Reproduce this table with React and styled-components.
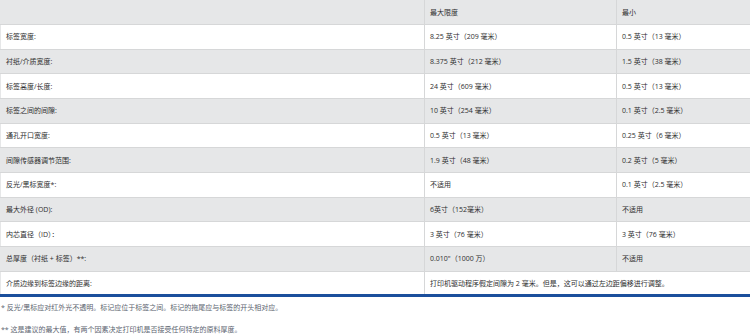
import React from 'react';
import styled, { createGlobalStyle } from 'styled-components';

const GlobalStyle = createGlobalStyle`
    html, body {
        margin: 0;
        padding: 0;
        background: #ffffff;
    }
    body {
        font-family: "Open Sans", "Noto Sans CJK SC", sans-serif;
        color: #333333;
    }
`

//STYLING
const Page = styled.div`
    width: 750px;
    height: 335px;
    overflow: hidden;
`
const SpecTable = styled.table`
    width: 750px;
    border-collapse: collapse;
    table-layout: fixed;
    border-bottom: 3px solid #1b4f9c;
`
const Row = styled.tr`
    background: ${props => (props.$shade ? '#e6e7e8' : '#ffffff')};
`
const Cell = styled.td`
    box-sizing: border-box;
    height: 24.67px;
    padding: 0 0 0 5px;
    font-size: 7px;
    line-height: 9px;
    color: #2e2e2e;
    vertical-align: middle;
    border-bottom: 1px solid #d6d7d8;
    border-left: ${props => (props.$first ? '1px solid #e6e7e8' : '1px solid #d6d7d8')};
    border-right: ${props => (props.$last ? '1px solid #d6d7d8' : 'none')};
    white-space: nowrap;
`
const Notes = styled.div`
    padding: 6px 0 0 1px;
`
const Note = styled.p`
    margin: 0 0 13px 0;
    font-size: 7px;
    line-height: 9px;
    color: #5c6470;
`

const rows = [
    ['标签宽度:', '8.25 英寸（209 毫米）', '0.5 英寸（13 毫米）'],
    ['衬纸/介质宽度:', '8.375 英寸（212 毫米）', '1.5 英寸（38 毫米）'],
    ['标签高度/长度:', '24 英寸（609 毫米）', '0.5 英寸（13 毫米）'],
    ['标签之间的间隙:', '10 英寸（254 毫米）', '0.1 英寸（2.5 毫米）'],
    ['通孔开口宽度:', '0.5 英寸（13 毫米）', '0.25 英寸（6 毫米）'],
    ['间隙传感器调节范围:', '1.9 英寸（48 毫米）', '0.2 英寸（5 毫米）'],
    ['反光/黑标宽度*:', '不适用', '0.1 英寸（2.5 毫米）'],
    ['最大外径 (OD):', '6英寸（152毫米）', '不适用'],
    ['内芯直径（ID）：', '3 英寸（76 毫米）', '3 英寸（76 毫米）'],
    ['总厚度（衬纸 + 标签）**:', '0.010"（1000 万）', '不适用'],
];

const App = () => {
    return (
        <Page>
            <GlobalStyle />
            <SpecTable>
                <colgroup>
                    <col style={{ width: 424 }} />
                    <col style={{ width: 192 }} />
                    <col style={{ width: 134 }} />
                </colgroup>
                <tbody>
                    <Row $shade>
                        <Cell $first></Cell>
                        <Cell>最大限度</Cell>
                        <Cell $last>最小</Cell>
                    </Row>
                    {rows.map((r, i) => (
                        <Row key={r[0]} $shade={i % 2 === 1}>
                            <Cell $first>{r[0]}</Cell>
                            <Cell>{r[1]}</Cell>
                            <Cell $last>{r[2]}</Cell>
                        </Row>
                    ))}
                    <Row>
                        <Cell $first>介质边缘到标签边缘的距离:</Cell>
                        <Cell $last colSpan={2}>打印机驱动程序假定间隙为 2 毫米。但是，这可以通过左边距偏移进行调整。</Cell>
                    </Row>
                </tbody>
            </SpecTable>
            <Notes>
                <Note>* 反光/黑标应对红外光不透明。标记应位于标签之间。标记的拖尾应与标签的开头相对应。</Note>
                <Note>** 这是建议的最大值，有两个因素决定打印机是否接受任何特定的原料厚度。</Note>
            </Notes>
        </Page>
    )
}

export default App;
